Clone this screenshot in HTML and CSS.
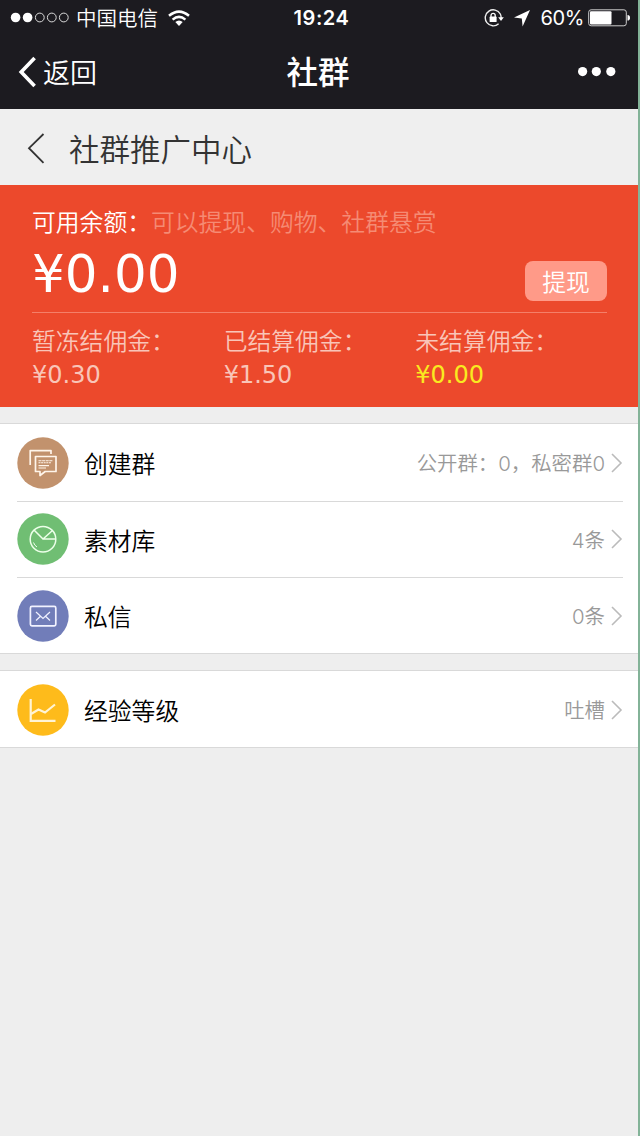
FILE: index.html
```html
<!DOCTYPE html>
<html lang="zh-CN">
<head>
<meta charset="utf-8">
<title>社群</title>
<link rel="stylesheet" href="styles.css">
</head>
<body>
<div class="screen">
  <header class="top">
    <div class="status">
      <div class="status-left">
        <svg class="signal" width="60" height="12" viewBox="0 0 60 12"><g fill="#fff"><circle cx="5.6" cy="5.5" r="4.8"/><circle cx="17.6" cy="5.5" r="4.8"/></g><g fill="none" stroke="#ddd" stroke-width="1"><circle cx="29.8" cy="5.5" r="4.4"/><circle cx="41.8" cy="5.5" r="4.4"/><circle cx="53.8" cy="5.5" r="4.4"/></g></svg>
        <span class="carrier">中国电信</span>
        <svg class="wifi" width="22" height="17" viewBox="0 0 22 17"><g fill="none" stroke="#fff" stroke-width="2.5"><path d="M1 5.8Q11-2.6 21 5.8"/><path d="M4.6 9.6Q11 4.2 17.4 9.6"/></g><path d="M7.3 12.1Q11 9 14.7 12.1L11 16z" fill="#fff"/></svg>
      </div>
      <span class="clock">19:24</span>
      <div class="status-right">
        <svg class="lock" width="20" height="18" viewBox="0 0 20 18"><path d="M16.3 5A8 8 0 1 0 14.6 14.8M16.3 5Q17.3 7 17.1 9.5" fill="none" stroke="#eee" stroke-width="1.4"/><path d="M14.2 8.2H19.8L17 12z" fill="#fff"/><rect x="5.6" y="7.6" width="7" height="5.4" rx=".6" fill="#fff"/><path d="M7 8V6.5a2.1 2.1 0 0 1 4.2 0V8" fill="none" stroke="#fff" stroke-width="1.3"/></svg>
        <svg class="arrow" width="16" height="17" viewBox="0 0 16 17"><path d="M16 0L8.6 16.4 7.8 8.6 0 7.6z" fill="#fff"/></svg>
        <span class="percent">60%</span>
        <svg class="battery" width="43" height="18" viewBox="0 0 43 18"><rect x=".7" y=".8" width="37.6" height="16" rx="2.4" fill="none" stroke="#ccc"/><rect x="2" y="2.2" width="21.5" height="13.2" rx="1" fill="#fff"/><path d="M39.5 6q2.5 0 2.5 2.8t-2.5 2.8z" fill="#fff"/></svg>
      </div>
    </div>
    <nav class="nav">
      <div class="back">
        <svg width="18" height="32" viewBox="0 0 18 32"><path d="M16.6 2L3.2 16 16.6 30" fill="none" stroke="#fff" stroke-width="3.6"/></svg>
        <span>返回</span>
      </div>
      <h1 class="nav-title">社群</h1>
      <svg class="more" width="38" height="10" viewBox="0 0 38 10"><g fill="#fff"><circle cx="4.6" cy="4.6" r="4.6"/><circle cx="18.3" cy="4.6" r="4.6"/><circle cx="32.8" cy="4.6" r="4.6"/></g></svg>
    </nav>
  </header>

  <div class="subhead">
    <svg width="18" height="32" viewBox="0 0 18 32"><path d="M16.5 1L2 15.2 16.5 29.8" fill="none" stroke="#333" stroke-width="1.8"/></svg>
    <h2 class="subhead-title">社群推广中心</h2>
  </div>

  <section class="balance">
    <p class="balance-label">可用余额：<span class="hint">可以提现、购物、社群悬赏</span></p>
    <div class="balance-main">
      <strong class="amount">¥0.00</strong>
      <button class="withdraw">提现</button>
    </div>
    <div class="stats">
      <div><p class="stat-label">暂冻结佣金：</p><p class="stat-value">¥0.30</p></div>
      <div><p class="stat-label">已结算佣金：</p><p class="stat-value">¥1.50</p></div>
      <div><p class="stat-label">未结算佣金：</p><p class="stat-value pending">¥0.00</p></div>
    </div>
  </section>

  <ul class="list">
    <li class="row">
      <svg class="badge" viewBox="0 0 52 52"><circle cx="26" cy="26" r="25.7" fill="#c2926d"/><g fill="none" stroke="#fff5ea" stroke-width="1.7" stroke-linejoin="round"><path d="M13.2 28V13.6H34V17"/><path d="M18.5 19.5H39V34.5H28.2L23 38.5V34.5H18.5z"/></g><g stroke="#fff5ea" stroke-width="1.1"><path d="M21.5 23.8H36" stroke-dasharray="3 .6"/><path d="M21.5 25.8H34.5" stroke-dasharray="2 .6"/><path d="M21.5 28.6H32M21.5 31H29"/></g></svg>
      <span class="name">创建群</span><span class="value">公开群：0，私密群0</span>
      <svg class="chevron" viewBox="0 0 12 20"><path d="M1 1L10 10 1 19"/></svg>
    </li>
    <li class="row">
      <svg class="badge" viewBox="0 0 52 52"><circle cx="26" cy="26" r="25.7" fill="#70be73"/><g fill="none" stroke="#ecffe9" stroke-width="1.5"><circle cx="26" cy="26.2" r="12.8"/><path d="M17 17L26 26 35.5 17.5M26 26H38.5"/><path d="M16.5 29.5Q17.5 32.5 20 34" stroke-width="1"/></g></svg>
      <span class="name">素材库</span><span class="value">4条</span>
      <svg class="chevron" viewBox="0 0 12 20"><path d="M1 1L10 10 1 19"/></svg>
    </li>
    <li class="row">
      <svg class="badge" viewBox="0 0 52 52"><circle cx="26" cy="26" r="25.7" fill="#717db9"/><g fill="none" stroke="#f1f2ff"><rect x="13.4" y="16.4" width="25.4" height="19.4" rx="1.5" stroke-width="1.7"/><path d="M19 22L26 28.5 33 22M19 30.5L23.2 26.5M33 30.5L28.8 26.5" stroke-width="1.2"/></g></svg>
      <span class="name">私信</span><span class="value">0条</span>
      <svg class="chevron" viewBox="0 0 12 20"><path d="M1 1L10 10 1 19"/></svg>
    </li>
  </ul>

  <ul class="list">
    <li class="row">
      <svg class="badge" viewBox="0 0 52 52"><circle cx="26" cy="26" r="25.7" fill="#febb1b"/><g fill="none" stroke="#fff4d5" stroke-width="2.2"><path d="M13.7 15V36.8H38.5"/><path d="M14 30L21.5 25.5 28 28.5 38 20.5"/></g></svg>
      <span class="name">经验等级</span><span class="value">吐槽</span>
      <svg class="chevron" viewBox="0 0 12 20"><path d="M1 1L10 10 1 19"/></svg>
    </li>
  </ul>
  <div class="edge"></div>
</div>
</body>
</html>
```
FILE: styles.css
```css
* { box-sizing: border-box; margin: 0; padding: 0; }
body { font-family: "Noto Sans CJK SC", sans-serif; font-weight: 350; }
svg { display: block; flex: none; }
ul { list-style: none; }
.screen { position: relative; width: 640px; height: 1136px; background: #eee; overflow: hidden; }
.edge { position: absolute; top: 0; right: 0; width: 2px; height: 1136px; background: #83b398; }

.top { height: 109px; background: #1c1b20; color: #fff; }
.status { display: grid; grid-template-columns: 1fr auto 1fr; align-items: center; height: 35px; padding: 0 10px; }
.status-left, .status-right { display: flex; align-items: center; }
.status-right { justify-content: flex-end; }
.carrier { margin-left: 6px; font-size: 20.5px; line-height: 33px; margin-bottom: 2px; }
.wifi { margin-left: 10px; }
.clock { padding: 1px 0 0 3px; font: 600 20px/35px Inter, sans-serif; letter-spacing: .6px; }
.arrow { margin-left: 10px; }
.percent { margin-left: 11px; font: 400 20px/35px Inter, sans-serif; letter-spacing: -.4px; }
.battery { margin-left: 6px; margin-right: -1px; }
.percent { margin-right: -2px; }
.nav { display: grid; grid-template-columns: 1fr auto 1fr; align-items: center; height: 73px; padding: 0 24px 0 18px; }
.back { display: flex; align-items: center; gap: 7px; font-size: 27px; line-height: 40px; }
.nav-title { padding: 0 0 3px 2px; font-size: 31.5px; font-weight: 500; line-height: 46px; }
.more { justify-self: end; }

.subhead { display: flex; align-items: center; gap: 23px; height: 76px; padding: 3px 27px 0; background: #efefef; color: #333; }
.subhead-title { margin-bottom: 2px; padding-left: 1px; font-size: 30.5px; font-weight: 350; line-height: 44px; }

.balance { height: 222px; padding: 18px 33px 0 32px; background: #ec492c; color: #fff; }
.balance-label { height: 36px; font-size: 23.8px; line-height: 36px; white-space: nowrap; }
.hint { color: #f58b74; }
.balance-main { display: flex; justify-content: space-between; height: 74px; border-bottom: 1px solid #f47f69; }
.amount { font: 400 51.5px/70px "DejaVu Sans", sans-serif; }
.withdraw { width: 82px; height: 40px; margin-top: 22px; border: 0; border-radius: 8px; background: #ff9a88; color: #fff; font: 350 23.8px/40px "Noto Sans CJK SC", sans-serif; }
.stats { display: grid; grid-template-columns: repeat(3, 1fr); padding-top: 9px; color: #f9c5b8; }
.stat-label { font-size: 23.8px; line-height: 36px; white-space: nowrap; }
.stat-value { padding-top: 1px; font: 400 24px/32px "DejaVu Sans", sans-serif; }
.pending { color: #f9ea20; }

.list { margin-top: 16px; padding: .6px 17px 0; background: #fff; border-top: 1px solid #d9d9d9; border-bottom: 1px solid #d9d9d9; }
.row { display: flex; align-items: center; height: 76.2px; }
.row + .row { border-top: 1px solid #d9d9d9; }
.list + .list .row { height: 75.4px; padding-top: 1px; }
.badge { width: 52px; height: 52px; }
.name { margin-left: 15px; padding-top: 1px; font-size: 23.8px; line-height: 36px; color: #000; }
.value { margin-left: auto; padding-top: 3px; font: 350 20.4px/30px Inter, "Noto Sans CJK SC", sans-serif; color: #999; }
.chevron { width: 12px; height: 20px; margin-left: 6px; fill: none; stroke: #bbb; stroke-width: 1.6; }
```
